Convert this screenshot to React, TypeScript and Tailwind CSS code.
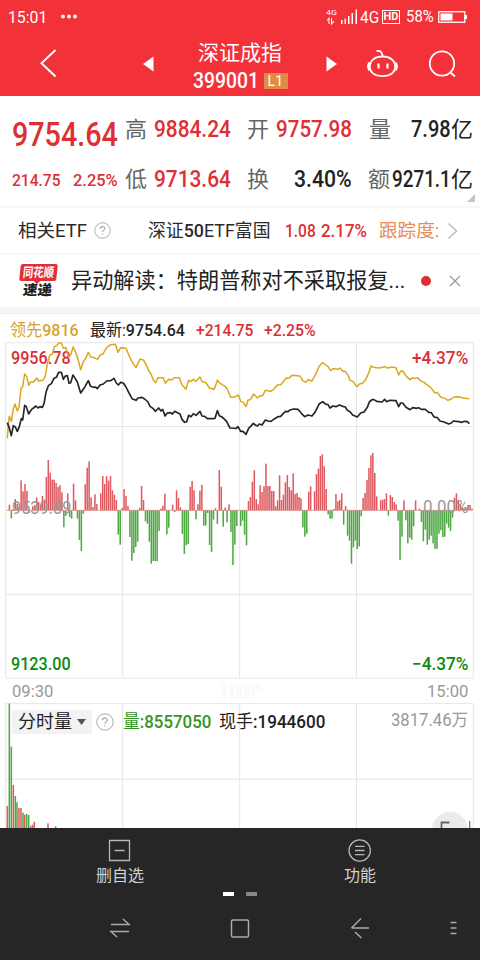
import { useLayoutEffect, useRef, type ReactNode } from "react";

/** Text squeezed or stretched horizontally to a fixed width. */
function Fit({ w, className = "", children }: { w: number; className?: string; children: ReactNode }) {
  const ref = useRef<HTMLSpanElement>(null);
  useLayoutEffect(() => {
    const el = ref.current;
    if (el && el.offsetWidth) el.style.transform = `scaleX(${w / el.offsetWidth})`;
  }, [w]);
  return (
    <span className={`block shrink-0 whitespace-nowrap ${className}`} style={{ width: w }}>
      <span ref={ref} className="inline-block origin-left">{children}</span>
    </span>
  );
}

// Minute-by-minute momentum; one unit is a third of a pixel.
const MOMENTUM = [
  0, 17, -24, 5, 34, 20, 10, 90, 57, 79, 58, -8, 0, 12, 16, 39, 25, 18, 43, 32, 100, 151, 113, 92, 92, 82, 70, 75, 54, -51,
  -17, 51, -20, -25, 80, 30, -25, -89, -122, -10, 78, 128, 147, 39, 10, 48, 19, 0, 51, 103, 79, 102, 89, 103, 60, 47, 31, -73, -103, 7,
  64, 43, 13, -80, -151, -128, -110, -94, 7, 73, 31, -33, -40, -94, -160, -152, -152, -153, -62, 5, 14, 50, -72, -52, 0, 17, -5, 60, 37, 9,
  -71, -131, -105, -101, 71, 88, 60, -27, 18, 59, 77, -46, -46, -8, -104, -125, -28, 6, -41, 121, 71, -49, 8, -36, 18, -65, -164, -103, -47, 0,
  -47, -31, -73, -105, 28, 40, 86, 120, 34, 18, 75, 55, 72, 140, 73, 73, 58, 58, 12, 30, 105, 31, 47, 84, 106, 70, 60, 111, 49, 52,
  40, 36, -51, -79, -70, 56, 72, 0, 57, 109, 125, 163, 168, 132, 64, -12, -25, -25, 4, 49, 27, 31, 51, -43, 13, -76, -91, -160, -111, -91,
  -116, -108, -18, 37, 52, 91, 127, 165, 172, 112, 42, 0, 30, 32, 34, 51, -16, 46, 40, 25, 18, -31, -149, -79, 30, -30, -99, -82, -88, -48,
  30, 0, 5, -35, -93, -58, -103, -88, -76, -99, -116, -115, -70, -60, -80, -79, -40, -52, -62, -22, 38, 51, 31, 18, 8, 5, 8, 16, 16, 5,
];

const LEAD =
  "22,385 25,345 28,319 34,334 40,296 45,282 52,303 57,291 63,235 68,230 74,192 80,200 86,226 92,216 101,216 110,204 116,213 130,210 136,197 142,160 150,134 157,133 163,110 170,107 176,99 184,99 190,115 197,112 206,142 212,136 219,111 226,124 234,148 242,179 251,152 257,146 265,127 272,141 280,142 293,148 301,134 308,133 320,113 332,104 346,103 354,127 362,113 378,115 386,134 394,152 408,173 414,160 420,147 430,150 438,163 446,182 454,194 460,210 467,218 474,203 490,203 496,220 506,208 514,210 524,203 538,203 546,224 558,238 566,211 572,215 580,208 588,214 600,201 606,214 618,218 628,234 642,238 648,224 652,210 658,218 666,224 674,228 682,238 692,262 702,262 715,255 722,274 730,277 738,290 744,270 751,269 761,252 766,257 772,264 780,257 788,257 796,241 812,244 822,237 832,225 842,224 850,215 858,204 866,205 876,196 900,198 908,212 918,217 924,209 936,213 945,197 958,168 968,158 978,165 984,170 992,182 998,176 1014,178 1020,174 1028,184 1036,184 1044,196 1050,211 1058,214 1072,230 1078,222 1088,220 1098,207 1106,189 1113,168 1120,172 1138,174 1154,170 1164,174 1176,171 1188,173 1196,195 1202,184 1208,183 1220,200 1230,209 1238,203 1244,206 1252,203 1262,212 1272,217 1284,227 1292,232 1304,248 1312,248 1322,261 1336,266 1344,271 1354,267 1362,261 1376,260 1390,264 1408,266";
const PRICE =
  "22,338 28,354 34,377 40,347 46,351 52,364 58,350 64,326 68,330 74,286 79,290 86,312 94,299 108,288 114,294 120,290 127,292 132,281 138,247 145,227 154,221 162,205 169,202 176,187 184,187 190,208 196,198 202,197 207,220 212,218 219,195 226,206 232,216 242,249 252,235 265,212 272,229 280,232 286,231 292,236 300,225 310,222 320,213 332,212 342,205 349,219 355,225 362,217 370,219 378,231 386,247 396,266 408,271 414,264 426,262 434,267 444,276 450,289 460,296 466,304 476,294 483,303 488,298 495,318 502,309 512,308 517,312 524,304 534,309 540,312 546,328 554,337 560,335 566,316 573,320 580,311 588,316 600,304 606,318 614,319 622,326 638,326 645,325 652,302 658,317 666,321 674,328 680,335 690,354 709,355 714,350 722,364 729,364 738,373 746,355 754,347 760,340 766,345 772,348 778,342 786,345 796,330 804,333 813,334 824,326 834,320 842,319 850,310 857,304 864,305 870,300 880,297 894,298 904,310 914,320 924,315 936,318 945,307 958,281 968,275 976,282 984,284 990,294 998,288 1008,290 1018,285 1028,289 1036,291 1042,301 1050,305 1058,315 1072,321 1082,309 1092,306 1102,292 1108,276 1116,269 1122,269 1130,274 1146,276 1154,268 1160,275 1170,271 1188,272 1196,290 1202,279 1208,279 1218,292 1230,299 1238,293 1250,295 1256,293 1264,298 1276,298 1286,307 1294,308 1302,321 1312,323 1320,333 1332,336 1346,342 1354,339 1360,333 1376,335 1386,337 1393,334 1402,335 1408,341";

// x, top, rising — measured in thirds of a pixel.
const VOLUME: [number, number, boolean][] = [
  [22, 498, true], [28, 191, false], [34, 320, false], [40, 435, true], [46, 468, false], [51, 487, false], [57, 504, true],
  [63, 504, true], [69, 518, false], [74, 524, true], [80, 522, false], [86, 525, false], [92, 557, true], [98, 554, true],
  [103, 545, true], [144, 550, true], [167, 559, false], [1409, 544, false],
];

function Help({ size }: { size: number }) {
  return (
    <svg width={size} height={size} viewBox="0 0 18 18" fill="none" stroke="#a9a9a9" strokeWidth="1" className="shrink-0">
      <circle cx="9" cy="9" r="8.2" />
      <path d="M6.6 7.2c0-3.2 4.8-3 4.8-.3 0 1.7-2.4 1.8-2.4 3.8M9 12.2v1.3" strokeWidth="1.2" />
    </svg>
  );
}

function StatusBar() {
  return (
    <div className="flex h-8 items-center pl-[8px] pt-px text-white">
      <Fit w={39} className="text-[17px] leading-5">15:01</Fit>
      <svg width="20" height="6" className="ml-[12px]" fill="#fff">
        <circle cx="4" cy="2.500" r="1.900" /><circle cx="10" cy="2.500" r="1.900" /><circle cx="16" cy="2.500" r="1.900" />
      </svg>
      <div className="ml-[247px] w-[12px] text-[8px] leading-[8px]">
        <Fit w={11}>4G</Fit>
        <svg width="12" height="8" fill="none" stroke="#fff" strokeWidth="1.1">
          <path d="M1 3.5 3 1.2V7M5.5 1v6L8 4.2" />
        </svg>
      </div>
      <svg width="19" height="17" className="ml-[2px]" fill="#fff">
        <path d="M1 12h1.500v4H1zM4.500 10.500H6V16H4.500zM8 8h1.500v8H8zM11.500 5H13v11h-1.500zM15.500 1.500H17V16h-1.500z" />
      </svg>
      <Fit w={19} className="ml-px text-[17px] leading-5">4G</Fit>
      <span className="ml-[3px] flex h-[14px] w-[18px] items-center justify-center border border-white text-[11px] font-bold leading-none">HD</span>
      <Fit w={28} className="ml-[6px] text-[16px] leading-5">58%</Fit>
      <svg width="30" height="12" className="ml-[4px]">
        <rect x="0.750" y="0.750" width="26" height="10.500" fill="none" stroke="#fff" strokeWidth="1.300" />
        <path d="M2.500 2.500h12v7h-12zM27 4h2v4h-2z" fill="#fff" />
      </svg>
    </div>
  );
}

function Header() {
  return (
    <div className="flex h-16 items-center text-white">
      <svg width="60" height="64" fill="none" stroke="#fff" strokeWidth="2"><path d="M55.500 18 41.500 31.300 55.500 44.500" /></svg>
      <svg width="120" height="64" fill="#fff"><path d="M83 32 93.500 24.500v15z" /></svg>
      <div className="flex h-16 w-[120px] flex-col items-center pt-[8px]">
        <Fit w={84} className="text-[21px] leading-[26px]">深证成指</Fit>
        <div className="flex h-[28px] items-center gap-[5px] pt-px">
          <Fit w={66} className="text-[22px] font-medium leading-6">399001</Fit>
          <span className="flex h-[16px] w-[24px] items-center justify-center bg-[#df8b45] text-[14px] leading-none tracking-wide">L1</span>
        </div>
      </div>
      <svg width="180" height="64" fill="none" stroke="#fff" strokeWidth="1.800">
        <path d="M26.500 24.500 37 32l-10.500 7.500z" fill="#fff" stroke="none" />
        <path d="M82.500 24.500c7.500 0 12.700 3.800 12.700 10 0 6-5 9.700-12.700 9.700s-12.700-3.700-12.700-9.700c0-6.200 5.200-10 12.700-10z" />
        <path d="M69.500 30.500c-2 2-2 6 0 8M95.500 30.500c2 2 2 6 0 8M76.500 19c4-.800 5.800 1.200 6.200 5.500" />
        <path d="M78.500 31.500v5M87.500 31.500v5" strokeWidth="2.200" />
        <circle cx="142" cy="31.500" r="12.200" />
        <path d="m150.500 40.500 4.500 4" />
      </svg>
    </div>
  );
}

function Quote() {
  const label = "text-[22px] leading-8 text-[#666]";
  const num = "text-[23px] font-medium leading-8";
  return (
    <section className="relative h-[110px] bg-white pl-[12px] pt-[14px] text-[#222]">
      <div className="flex h-10 items-center">
        <Fit w={106} className="mt-[10px] text-[33px] font-medium leading-10 text-[#dc3034]">9754.64</Fit>
        <Fit w={22} className={`ml-[7px] ${label}`}>高</Fit>
        <Fit w={77} className={`ml-[7px] ${num} text-[#dc3034]`}>9884.24</Fit>
        <Fit w={22} className={`ml-[16px] ${label}`}>开</Fit>
        <Fit w={76} className={`ml-[7px] ${num} text-[#dc3034]`}>9757.98</Fit>
        <Fit w={22} className={`ml-[17px] ${label}`}>量</Fit>
        <Fit w={40} className={`ml-[20px] ${num}`}>7.98</Fit>
        <Fit w={22} className="text-[22px] leading-8">亿</Fit>
      </div>
      <div className="mt-[10px] flex h-10 items-center">
        <Fit w={48.500} className="text-[17px] font-medium leading-8 text-[#dc3034]">214.75</Fit>
        <Fit w={44.500} className="ml-[12px] text-[17px] font-medium leading-8 text-[#dc3034]">2.25%</Fit>
        <Fit w={22} className={`ml-[8px] ${label}`}>低</Fit>
        <Fit w={77} className={`ml-[7px] ${num} text-[#dc3034]`}>9713.64</Fit>
        <Fit w={22} className={`ml-[16px] ${label}`}>换</Fit>
        <Fit w={58} className={`ml-[25px] ${num}`}>3.40%</Fit>
        <Fit w={22} className={`ml-[16px] ${label}`}>额</Fit>
        <Fit w={59} className={`ml-[2px] ${num}`}>9271.1</Fit>
        <Fit w={22} className="text-[22px] leading-8">亿</Fit>
      </div>
      <svg width="9" height="9" className="absolute bottom-[3px] right-[4px]" fill="#c4c4c4"><path d="M8 0v8H0z" /></svg>
    </section>
  );
}

function EtfRow() {
  return (
    <div className="flex h-[45px] items-center pl-[18px] text-[18px] leading-7 text-[#2b2b2b]">
      <Fit w={69}>相关ETF</Fit>
      <span className="ml-[7px] flex"><Help size={17} /></span>
      <Fit w={123} className="ml-[37px]">深证<span className="font-medium">50</span>ETF富国</Fit>
      <Fit w={31} className="ml-[14px] font-medium text-[#dc3034]">1.08</Fit>
      <Fit w={46} className="ml-[5px] font-medium text-[#dc3034]">2.17%</Fit>
      <Fit w={60} className="ml-[12px] text-[#e88d50]">跟踪度:</Fit>
      <svg width="12" height="18" className="ml-[8px]" fill="none" stroke="#bdbdbd" strokeWidth="1.500"><path d="m1.500 1.500 8 7.500-8 7.500" /></svg>
    </div>
  );
}

function NewsRow() {
  return (
    <div className="flex h-[54px] items-center border-t border-[#f4f4f4] pl-[18px] text-[#222]">
      <div className="h-[34px] w-[40px]">
        <div className="relative ml-[2px] flex h-[17px] w-[37px] -skew-x-6 items-center justify-center rounded-[2px] bg-[#dc3238] text-white">
          <Fit w={31} className="text-[13px] font-bold leading-[17px]">同花顺</Fit>
          <span className="absolute -bottom-[2px] left-[15px] h-[6px] w-[6px] rotate-45 bg-[#dc3238]" />
        </div>
        <Fit w={29} className="ml-[5px] mt-[2px] -skew-x-6 text-[14px] font-black leading-[15px]">速递</Fit>
      </div>
      <Fit w={334} className="ml-[13px] text-[21.300px] leading-8">异动解读：特朗普称对不采取报复...</Fit>
      <span className="ml-[16px] h-[10px] w-[10px] rounded-full bg-[#e02f34]" />
      <svg width="12" height="12" className="ml-[18px]" stroke="#999" strokeWidth="1.200"><path d="m1 1 10 10M11 1 1 11" /></svg>
    </div>
  );
}

function PriceChart() {
  return (
    <div className="relative h-[336px] font-medium">
      <svg width="480" height="336" viewBox="0 1029 1440 1008" className="block overflow-visible">
        <path d="M17 1028H1420M17 1279.500H1420M17 1531H1420M17 1783H1420M17 2034H1420M17 1028V2034M368 1028V2034M719 1028V2034M1069.500 1028V2034M1420 1028V2034" stroke="#e6e6e6" strokeWidth="3" fill="none" />
        {MOMENTUM.map((v, i) =>
          v === 0 ? null : (
            <rect key={i} x={20.200 + i * 5.830} y={v > 0 ? 1531 - v : 1531} width="4.600" height={Math.abs(v)} fill={v > 0 ? "#df5a60" : "#4fa843"} />
          ),
        )}
        <path d="M20 1531H1400" stroke="#d98a80" strokeWidth="2" />
      </svg>
      <span className="absolute left-[12px] top-[153px] text-[18px] font-normal leading-6 text-[#999]"><Fit w={59}>9539.89</Fit></span>
      <span className="absolute right-[12px] top-[152px] text-[18px] font-normal leading-6 text-[#999]"><Fit w={45}>0.00%</Fit></span>
      <span className="absolute left-[11px] top-[3px] text-[17.500px] leading-6 text-[#d92f36]"><Fit w={60}>9956.78</Fit></span>
      <span className="absolute right-[12px] top-[3px] text-[17.500px] leading-6 text-[#d92f36]"><Fit w={56}>+4.37%</Fit></span>
      <span className="absolute left-[11px] top-[309px] text-[17.500px] leading-6 text-[#0b8a0b]"><Fit w={60}>9123.00</Fit></span>
      <span className="absolute right-[12px] top-[309px] text-[17.500px] leading-6 text-[#0b8a0b]"><Fit w={56}>−4.37%</Fit></span>
      <svg width="480" height="336" viewBox="0 99 1440 1008" className="absolute inset-0 overflow-visible" fill="none" strokeWidth="4.500" strokeLinejoin="round">
        <polyline points={LEAD} stroke="#dca71c" />
        <polyline points={PRICE} stroke="#252525" strokeWidth="5" />
      </svg>
    </div>
  );
}

function VolumeChart() {
  return (
    <div className="relative h-[125px] overflow-hidden">
      <svg width="480" height="125" viewBox="0 189 1440 375" className="absolute inset-0">
        <path d="M17 191H1420M17 417.500H1420M17 191V564M368 191V564M719 191V564M1069.500 191V564M1420 191V564" stroke="#e6e6e6" strokeWidth="3" fill="none" />
        {VOLUME.map(([x, y, up]) => (
          <rect key={x} x={x - 2.300} y={y} width="4.600" height={564 - y} fill={up ? "#df5a60" : "#4fa843"} />
        ))}
      </svg>
      <div className="relative flex pl-[12px] pt-[7px] text-[18px] leading-6 text-[#222]">
        <div className="flex h-6 w-[80px] items-center rounded-[2px] bg-[#f2f2f2] pl-[6px]">
          <Fit w={54}>分时量</Fit>
          <svg width="9" height="6" className="ml-[5px]" fill="#555"><path d="M0 0h9L4.500 6z" /></svg>
        </div>
        <span className="ml-[4px] flex items-center"><Help size={18} /></span>
        <Fit w={88} className="ml-[9px] font-medium text-[#369425]"><span className="font-normal">量</span>:8557050</Fit>
        <Fit w={106} className="ml-[8px] font-medium"><span className="font-normal">现手</span>:1944600</Fit>
        <Fit w={77} className="-mt-[2px] ml-[66px] text-[17.500px] text-[#999]">3817.46万</Fit>
      </div>
      <div className="absolute left-[432px] top-[109px] h-9 w-9 rounded-full bg-[#ebebeb]">
        <svg width="36" height="36" fill="none" stroke="#666" strokeWidth="1.800"><path d="M9.500 18v-7.500h8" /></svg>
      </div>
      <span className="absolute left-[469px] top-[118px] h-[7px] w-px bg-[#4fa843]" />
    </div>
  );
}

function BottomBar() {
  return (
    <div className="h-[132px] bg-[#262626] text-[#d2d2d2]">
      <div className="grid h-[60px] grid-cols-2 pt-[11px] text-[16px] leading-6">
        <div className="flex flex-col items-center gap-px">
          <svg width="24" height="24" fill="none" stroke="#b5b5b5" strokeWidth="1.300"><path d="M1.500 1.500h20v20h-20zM6.500 11.500h10" /></svg>
          <Fit w={48}>删自选</Fit>
        </div>
        <div className="flex flex-col items-center gap-px">
          <svg width="24" height="24" fill="none" stroke="#b5b5b5" strokeWidth="1.300"><circle cx="11.700" cy="11.500" r="10.700" /><path d="M7 7.300h9.500M7 11.500h9.500M7 15.700h9.500" /></svg>
          <Fit w={32}>功能</Fit>
        </div>
      </div>
      <div className="flex justify-center gap-[12px] pt-[4px]">
        <span className="h-[4px] w-[11px] bg-white" />
        <span className="h-[4px] w-[11px] bg-[#888]" />
      </div>
      <svg width="480" height="64" fill="none" stroke="#aaa" strokeWidth="1.500" className="block">
        <path d="M111 28.500h18l-6-5.500M129 35.500h-18l6 5.500" />
        <rect x="231.500" y="24" width="17" height="17" rx="1.500" />
        <path d="M369 32h-17.500M361 22.500 351.500 32M355 36l6.500 6" />
        <path d="M450.500 26.500h6M450.500 32h6M450.500 37.500h6" />
      </svg>
    </div>
  );
}

export default function App() {
  return (
    <main className="h-[960px] w-[480px] overflow-hidden bg-white font-[Roboto,'Noto_Sans_CJK_SC',sans-serif]">
      <header className="h-24 bg-[#f33139]">
        <StatusBar />
        <Header />
      </header>
      <Quote />
      <div className="h-[2px] bg-[#f7f7f7]" />
      <EtfRow />
      <NewsRow />
      <div className="h-[7px] border-b border-[#eee] bg-[#f6f6f6]" />
      <div className="flex h-[29px] items-center pl-[10px] pt-[2px] text-[17px] leading-6 text-[#222]">
        <Fit w={69} className="text-[#d9a32a]">领先<span className="font-medium">9816</span></Fit>
        <Fit w={95} className="ml-[11px]">最新:<span className="font-medium">9754.64</span></Fit>
        <Fit w={57} className="ml-[11px] font-medium text-[#d92f36]">+214.75</Fit>
        <Fit w={52} className="ml-[11px] font-medium text-[#d92f36]">+2.25%</Fit>
      </div>
      <PriceChart />
      <div className="flex h-[24px] items-center justify-between pl-[12px] pr-[12px] text-[17px] leading-6 text-[#999]">
        <Fit w={41}>09:30</Fit>
        <svg width="42" height="18" fill="#fafafa"><path d="M3 2h5v15H3zM11 2h4v15h-4zM17 2h6v15h-6zM25 2h5v15h-5zM32 2h9v6h-5v9h-4z" /></svg>
        <Fit w={41}>15:00</Fit>
      </div>
      <VolumeChart />
      <BottomBar />
    </main>
  );
}
